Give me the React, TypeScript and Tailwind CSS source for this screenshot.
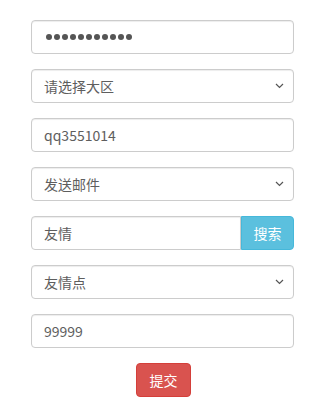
const field =
  'block h-[34px] w-full rounded-[4px] border border-[#ccc] bg-white px-3 text-[14px] text-[#5e5e5e] shadow-[inset_0_1px_1px_rgba(0,0,0,0.075)] outline-none';

const Chevron = () => (
  <svg
    className="pointer-events-none absolute right-[10px] top-1/2 -translate-y-1/2"
    width="9"
    height="6"
    viewBox="0 0 9 6"
    fill="none"
  >
    <path d="M1 1l3.5 3.5L8 1" stroke="#555" strokeWidth="1.2" />
  </svg>
);

const Select = ({ label }: { label: string }) => (
  <div className="relative">
    <select className={`${field} appearance-none`} defaultValue={label}>
      <option>{label}</option>
    </select>
    <Chevron />
  </div>
);

const App = () => {
  return (
    <div
      className="min-h-[411px] bg-white pt-[20px]"
      style={{ fontFamily: '"Noto Sans CJK SC", "Noto Sans", sans-serif' }}
    >
      <form className="ml-[31px] flex w-[263px] flex-col gap-[15px]">
        {/* password field, dots drawn as circles */}
        <div className={`${field} flex items-center gap-[2px] pl-[14px]`}>
          {Array.from({ length: 11 }).map((_, i) => (
            <span key={i} className="h-[6px] w-[6px] rounded-full bg-[#555]" />
          ))}
        </div>
        <Select label="请选择大区" />
        <input type="text" readOnly defaultValue="qq3551014" className={field} />
        <Select label="发送邮件" />
        <div className="flex">
          <input
            type="text"
            readOnly
            defaultValue="友情"
            className={`${field} flex-1 rounded-r-none`}
          />
          <button
            type="button"
            className="h-[34px] w-[53px] shrink-0 rounded-r-[4px] border border-[#46b8da] bg-[#5bc0de] text-[14px] text-white"
          >
            搜索
          </button>
        </div>
        <Select label="友情点" />
        <input type="text" readOnly defaultValue="99999" className={field} />
        <div className="flex justify-center">
          <button
            type="button"
            className="ml-[2px] h-[34px] w-[55px] rounded-[4px] border border-[#d43f3a] bg-[#d9534f] text-[14px] text-white"
          >
            提交
          </button>
        </div>
      </form>
    </div>
  );
};

export default App;
